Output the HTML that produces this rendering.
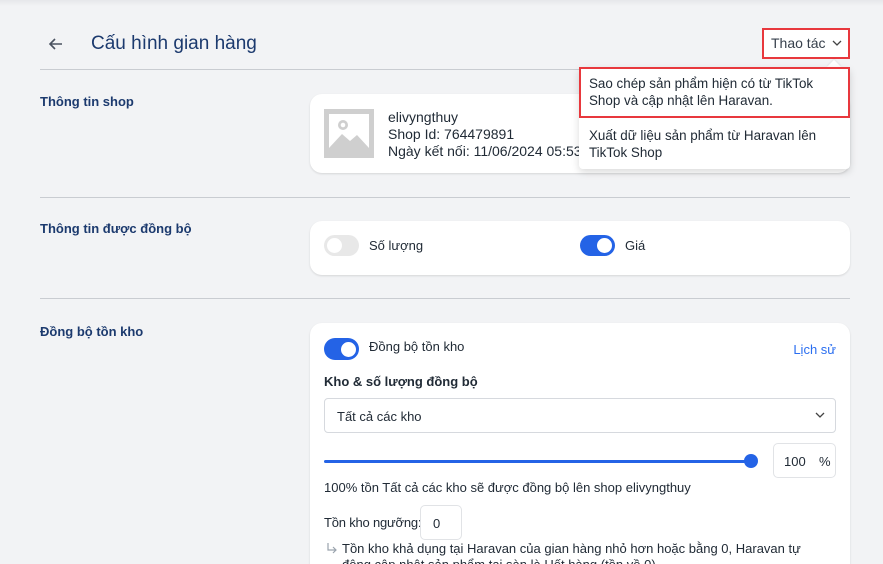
<!DOCTYPE html>
<html><head><meta charset="utf-8"><style>
*{margin:0;padding:0;box-sizing:border-box}
html{overflow:hidden;width:883px;height:564px}
body{width:883px;height:564px;overflow:hidden;background:#f2f3f5;font-family:"Liberation Sans","Noto Sans CJK SC",sans-serif;color:#212b36;position:relative;font-size:13px}
.a{position:absolute;white-space:nowrap}
.hr{position:absolute;left:40px;width:810px;height:1px;background:#c9ccd1}
.lbl{position:absolute;left:40px;color:#1c3a6e;font-weight:bold;font-size:13px}
.card{position:absolute;left:310px;width:540px;background:#fff;border-radius:12px;box-shadow:0 1px 2px rgba(0,0,0,.12)}
.tg{position:absolute;width:35px;height:21px;border-radius:11px}
.tg i{position:absolute;top:3px;width:15px;height:15px;border-radius:50%;background:#fff}
</style></head><body>
<div style="position:absolute;left:0;top:0;width:883px;height:6px;background:linear-gradient(#e6e7ea,#f2f3f5)"></div>
<svg class="a" style="left:48px;top:36px" width="16" height="16" viewBox="0 0 16 16"><path d="M14 8H2M7 3L2 8l5 5" stroke="#4a5260" stroke-width="1.6" fill="none"/></svg>
<div class="a" style="left:91px;top:33px;font-size:19px;color:#1c3a6e">Cấu hình gian hàng</div>
<div class="hr" style="top:69px"></div>
<div class="lbl" style="top:94px">Thông tin shop</div>
<div class="card" style="top:94px;height:79px">
 <div style="position:absolute;left:14px;top:15px;width:50px;height:49px;background:#cfcfcf">
  <svg width="50" height="49" viewBox="0 0 50 49"><rect x="5" y="5" width="40" height="34" fill="#fff"/><path d="M5 39L18 25l8 7 7-6 12 13z" fill="#cfcfcf"/><circle cx="19" cy="16" r="5" fill="#cfcfcf"/><circle cx="19" cy="16" r="2.3" fill="#fff"/></svg>
 </div>
 <div class="a" style="left:78px;top:15px;font-size:14px;line-height:17px">elivyngthuy<br>Shop Id: 764479891<br>Ngày kết nối: 11/06/2024 05:53</div>
</div>
<div class="hr" style="top:197px"></div>
<div class="lbl" style="top:221px">Thông tin được đồng bộ</div>
<div class="card" style="top:221px;height:54px">
 <div class="tg" style="left:14px;top:14px;background:#e8e8e8"><i style="left:3px"></i></div>
 <div class="a" style="left:59px;top:17px;font-size:13px">Số lượng</div>
 <div class="tg" style="left:270px;top:14px;background:#2463e6"><i style="left:17px"></i></div>
 <div class="a" style="left:315px;top:17px;font-size:13px">Giá</div>
</div>
<div class="hr" style="top:298px"></div>
<div class="lbl" style="top:324px">Đồng bộ tồn kho</div>
<div class="card" style="top:323px;height:260px">
 <div class="tg" style="left:14px;top:15px;background:#2463e6;height:22px;width:35px"><i style="left:17px;top:3.5px"></i></div>
 <div class="a" style="left:59px;top:16px">Đồng bộ tồn kho</div>
 <div class="a" style="right:14px;top:19px;color:#2a6ef0">Lịch sử</div>
 <div class="a" style="left:14px;top:51px;font-weight:bold">Kho &amp; số lượng đồng bộ</div>
 <div style="position:absolute;left:14px;top:75px;width:512px;height:35px;border:1px solid #d6d9de;border-radius:4px">
  <div class="a" style="left:12px;top:10px">Tất cả các kho</div>
  <svg class="a" style="right:10px;top:13px" width="10" height="7" viewBox="0 0 10 7"><path d="M1 1l4 4 4-4" stroke="#444" stroke-width="1.3" fill="none"/></svg>
 </div>
 <div style="position:absolute;left:14px;top:137px;width:427px;height:3px;background:#2463e6;border-radius:2px"></div>
 <div style="position:absolute;left:434px;top:131px;width:14px;height:14px;border-radius:50%;background:#2463e6"></div>
 <div style="position:absolute;left:463px;top:120px;width:63px;height:35px;border:1px solid #e1e3e6;border-radius:5px">
  <div class="a" style="left:10px;top:10px">100</div><div class="a" style="left:45px;top:10px">%</div>
 </div>
 <div class="a" style="left:14px;top:157px">100% tồn Tất cả các kho sẽ được đồng bộ lên shop elivyngthuy</div>
 <div class="a" style="left:14px;top:192px;letter-spacing:-0.2px">Tồn kho ngưỡng:</div>
 <div style="position:absolute;left:110px;top:182px;width:42px;height:35px;border:1px solid #e1e3e6;border-radius:5px"><div class="a" style="left:12px;top:10px">0</div></div>
 <svg class="a" style="left:16px;top:219px" width="12" height="12" viewBox="0 0 12 12"><path d="M2 1v7h8M7 5l3 3-3 3" stroke="#9aa3ad" stroke-width="1.2" fill="none"/></svg>
 <div class="a" style="left:32px;top:218px;line-height:16px">Tồn kho khả dụng tại Haravan của gian hàng nhỏ hơn hoặc bằng 0, Haravan tự<br>động cập nhật sản phẩm tại sàn là Hết hàng (tồn về 0)</div>
</div>
<div style="position:absolute;left:762px;top:28px;width:88px;height:31px;border:2px solid #e8383d;background:#fff"></div>
<div class="a" style="left:771px;top:35px;font-size:14px;color:#37404c">Thao tác</div>
<svg class="a" style="left:832px;top:40px" width="10" height="7" viewBox="0 0 10 7"><path d="M1 1l4 4 4-4" stroke="#444" stroke-width="1.3" fill="none"/></svg>
<div style="position:absolute;left:829px;top:62px;width:10px;height:10px;background:#fff;transform:rotate(45deg);box-shadow:-1px -1px 2px rgba(0,0,0,.06)"></div>
<div style="position:absolute;left:579px;top:67px;width:271px;height:102px;background:#fff;border-radius:4px;box-shadow:0 3px 8px rgba(0,0,0,.15)"></div>
<div style="position:absolute;left:579px;top:67px;width:271px;height:51px;border:2px solid #e8383d"></div>
<div class="a" style="left:589px;top:75px;line-height:17px;font-size:13.4px;color:#212b36">Sao chép sản phẩm hiện có từ TikTok<br>Shop và cập nhật lên Haravan.</div>
<div class="a" style="left:589px;top:127px;line-height:17px;font-size:13.4px;color:#212b36">Xuất dữ liệu sản phẩm từ Haravan lên<br>TikTok Shop</div>
</body></html>
